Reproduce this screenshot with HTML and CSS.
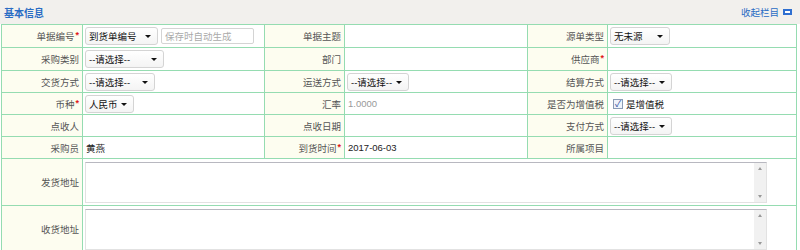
FILE: index.html
```html
<!DOCTYPE html>
<html lang="zh-CN">
<head>
  <meta charset="UTF-8" />
  <title>基本信息</title>
  <link rel="stylesheet" href="styles.css">
</head>
<body>
  <div class="panel">
    <!-- Panel header -->
    <div class="panel-head">
      <span class="panel-title">基本信息</span>
      <a class="panel-toggle">收起栏目<i class="toggle-icon"></i></a>
    </div>

    <table class="form-table">
      <colgroup>
        <col class="c-label1">
        <col class="c-val1">
        <col class="c-label2">
        <col class="c-val2">
        <col class="c-label3">
        <col class="c-val3">
      </colgroup>
      <tr class="row-first">
        <th>单据编号<em>*</em></th>
        <td><span class="sel w73">到货单编号</span><span class="auto-input">保存时自动生成</span></td>
        <th>单据主题</th>
        <td></td>
        <th>源单类型</th>
        <td><span class="sel w60">无未源</span></td>
      </tr>
      <tr class="row-first">
        <th>采购类别</th>
        <td><span class="sel w79">--请选择--</span></td>
        <th>部门</th>
        <td></td>
        <th>供应商<em>*</em></th>
        <td></td>
      </tr>
      <tr>
        <th>交货方式</th>
        <td><span class="sel w70">--请选择--</span></td>
        <th>运送方式</th>
        <td><span class="sel w62">--请选择--</span></td>
        <th>结算方式</th>
        <td><span class="sel w62">--请选择--</span></td>
      </tr>
      <tr>
        <th>币种<em>*</em></th>
        <td><span class="sel w49">人民币</span></td>
        <th>汇率</th>
        <td class="muted">1.0000</td>
        <th>是否为增值税</th>
        <td><label class="check"><span class="box">&#10003;</span>是增值税</label></td>
      </tr>
      <tr>
        <th>点收人</th>
        <td></td>
        <th>点收日期</th>
        <td></td>
        <th>支付方式</th>
        <td><span class="sel w62">--请选择--</span></td>
      </tr>
      <tr>
        <th>采购员</th>
        <td class="val">黄燕</td>
        <th>到货时间<em>*</em></th>
        <td class="val">2017-06-03</td>
        <th>所属项目</th>
        <td></td>
      </tr>
      <tr class="row-area">
        <th>发货地址</th>
        <td colspan="5"><div class="area"><div class="area-scroll"><i class="up"></i><i class="down"></i></div></div></td>
      </tr>
      <tr class="row-area">
        <th>收货地址</th>
        <td colspan="5"><div class="area"><div class="area-scroll"><i class="up"></i><i class="down"></i></div></div></td>
      </tr>
    </table>
  </div>
</body>
</html>
```

FILE: styles.css
```css
body {
  margin: 0;
  font-family: "Liberation Sans", "Noto Sans CJK SC", sans-serif;
  font-size: 9.5px;
  background: #fff;
  color: #333;
}
.panel {
  width: 800px;
  height: 250px;
  overflow: hidden;
}
.panel-head {
  height: 24px;
  background: #f2f0ed;
  display: flex;
  align-items: center;
  justify-content: space-between;
  padding: 0 8px 0 4px;
  box-sizing: border-box;
}
.panel-title {
  color: #2a6cc4;
  font-weight: bold;
  font-size: 10px;
}
.panel-toggle {
  color: #2a6cc4;
  display: flex;
  align-items: center;
  gap: 4px;
  font-size: 9.5px;
}
.toggle-icon {
  display: inline-block;
  width: 9px;
  height: 6px;
  background: #2f6fd0;
  position: relative;
}
.toggle-icon::after {
  content: "";
  position: absolute;
  left: 2px;
  right: 2px;
  top: 2px;
  height: 2px;
  background: #fff;
}
.form-table {
  margin-left: 1px;
  width: 795px;
  border-collapse: collapse;
  table-layout: fixed;
}
.c-label1 { width: 81px; }
.c-val1 { width: 182px; }
.c-label2 { width: 80px; }
.c-val2 { width: 183px; }
.c-label3 { width: 80px; }
.c-val3 { width: 189px; }
.form-table th,
.form-table td {
  border: 1px solid #95dcb1;
  height: 21px;
  padding: 0 2px;
  white-space: nowrap;
  overflow: hidden;
}
.form-table .row-first th,
.form-table .row-first td {
  height: 22px;
}
.form-table th {
  background: #fdfdf0;
  text-align: right;
  font-weight: normal;
  color: #555;
  padding-right: 3px;
}
.form-table th em {
  color: #e01818;
  font-style: normal;
  font-weight: bold;
  font-size: 9px;
  vertical-align: 2px;
  margin-left: 1px;
}
.form-table td.val {
  color: #222;
  padding-left: 3px;
}
.form-table td.muted {
  color: #999;
  padding-left: 3px;
}
.sel {
  display: inline-flex;
  align-items: center;
  height: 18px;
  box-sizing: border-box;
  border: 1px solid #d4d4d4;
  border-radius: 3px;
  background: linear-gradient(#fff, #f4f4f4);
  padding-left: 3px;
  color: #111;
  position: relative;
  vertical-align: middle;
}
.sel::after {
  content: "";
  position: absolute;
  right: 6px;
  top: 7px;
  border-left: 3px solid transparent;
  border-right: 3px solid transparent;
  border-top: 3px solid #111;
}
.w49 { width: 49px; }
.w60 { width: 60px; }
.w62 { width: 62px; }
.w70 { width: 70px; }
.w73 { width: 73px; }
.w79 { width: 79px; }
.auto-input {
  display: inline-flex;
  align-items: center;
  margin-left: 3px;
  width: 93px;
  height: 16px;
  box-sizing: border-box;
  border: 1px solid #d4d4d4;
  border-radius: 2px;
  padding-left: 3px;
  color: #aaa;
  vertical-align: middle;
}
.check {
  display: inline-flex;
  align-items: center;
  gap: 3px;
  color: #222;
  padding-left: 3px;
}
.check .box {
  width: 10px;
  height: 10px;
  box-sizing: border-box;
  border: 1px solid #8a9bb5;
  background: #eef3fb;
  color: #2d4fa0;
  font-size: 9px;
  line-height: 8px;
  text-align: center;
}
.form-table .row-area th,
.form-table .row-area td {
  height: 46px;
}
.area {
  width: 682px;
  height: 41px;
  box-sizing: border-box;
  border: 1px solid #e2e2e2;
  border-top-color: #b8b8c0;
  background: #fff;
  display: flex;
  justify-content: flex-end;
}
.area-scroll {
  width: 12px;
  background: #f1f1f1;
  display: flex;
  flex-direction: column;
  justify-content: space-between;
  align-items: center;
  padding: 4px 0;
  box-sizing: border-box;
}
.area-scroll .up {
  border-left: 2px solid transparent;
  border-right: 2px solid transparent;
  border-bottom: 3px solid #999;
}
.area-scroll .down {
  border-left: 2px solid transparent;
  border-right: 2px solid transparent;
  border-top: 3px solid #999;
}
```
